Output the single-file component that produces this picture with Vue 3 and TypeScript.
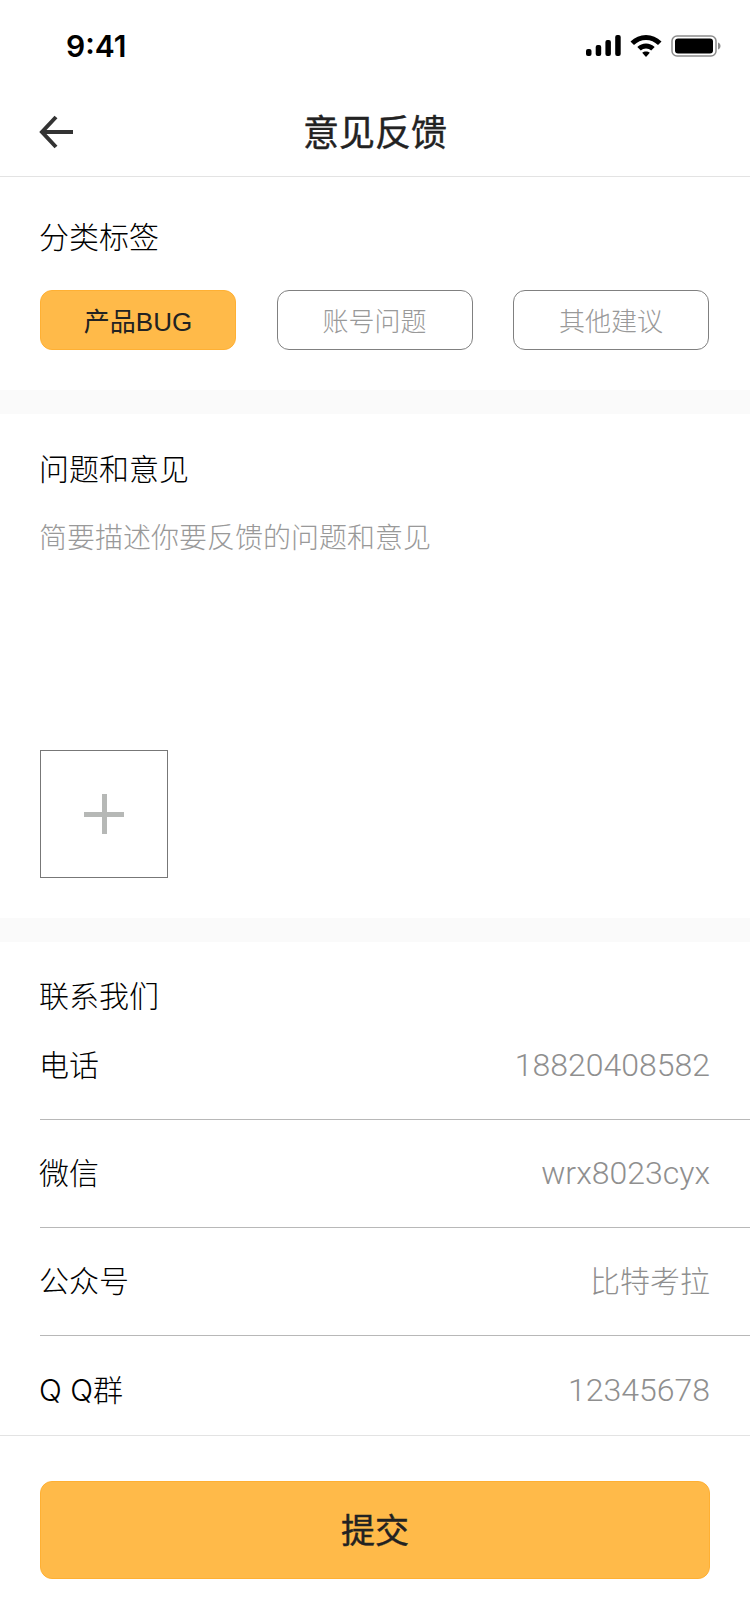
<template>
  <div class="page">
    <div class="status-bar">
      <span class="time">9:41</span>
      <div class="status-icons">
        <svg class="signal" width="35" height="22" viewBox="0 0 35 22" aria-hidden="true">
          <rect x="0" y="14" width="5.500" height="7" rx="2" />
          <rect x="9.700" y="10" width="5.500" height="11" rx="2" />
          <rect x="19.400" y="5" width="5.500" height="16" rx="2" />
          <rect x="29.200" y="0" width="5.500" height="21" rx="2" />
        </svg>
        <svg class="wifi" width="32" height="22" viewBox="0 0 32 22" aria-hidden="true">
          <path d="M16 0C10 0 5 2.300 0.500 6.500L4 10C7.300 6.900 11.400 5 16 5C20.600 5 24.700 6.900 28 10L31.500 6.500C27 2.300 22 0 16 0Z" />
          <path d="M16 8.500C12.700 8.500 9.700 9.800 7.300 12.100L10.800 15.600C12.200 14.300 14 13.500 16 13.500C18 13.500 19.800 14.300 21.200 15.600L24.700 12.100C22.300 9.800 19.300 8.500 16 8.500Z" />
          <path d="M16 22L12.200 17.800C13.200 16.900 14.500 16.400 16 16.400C17.500 16.400 18.800 16.900 19.800 17.800Z" />
        </svg>
        <svg class="battery" width="50" height="22" viewBox="0 0 50 22" aria-hidden="true">
          <rect x="1" y="1" width="44" height="20" rx="5" fill="none" stroke="#8c8c8c" stroke-width="1.500" />
          <rect x="4" y="3.500" width="38" height="15" rx="3" />
          <path d="M47 7.500C48.500 8 49.500 9.300 49.500 11C49.500 12.700 48.500 14 47 14.500Z" fill="#8c8c8c" />
        </svg>
      </div>
    </div>

    <header class="nav">
      <svg class="back" width="36" height="34" viewBox="0 0 36 34" aria-hidden="true">
        <path d="M18 2L4 17L18 32M4 17H35" fill="none" stroke="#333" stroke-width="4" />
      </svg>
      <h1 class="nav-title">意见反馈</h1>
    </header>

    <section class="block tags-block">
      <h2 class="block-title">分类标签</h2>
      <div class="tags">
        <button
          v-for="tag in tags"
          :key="tag"
          type="button"
          :class="['tag', { active: tag === activeTag }]"
        >
          {{ tag }}
        </button>
      </div>
    </section>

    <section class="block feedback-block">
      <h2 class="block-title">问题和意见</h2>
      <p class="placeholder">简要描述你要反馈的问题和意见</p>
      <div class="add-box">
        <span class="plus"></span>
      </div>
    </section>

    <section class="contact-block">
      <h2 class="block-title contact-title">联系我们</h2>
      <div v-for="row in contacts" :key="row.label" class="row">
        <span class="row-label">{{ row.label }}</span>
        <span :class="['row-value', { numeric: row.numeric }]">{{ row.value }}</span>
      </div>
    </section>

    <footer class="footer">
      <button type="button" class="submit">提交</button>
    </footer>
  </div>
</template>

<script setup lang="ts">
interface ContactRow {
  label: string;
  value: string;
  numeric?: boolean;
}

const tags: string[] = ['产品BUG', '账号问题', '其他建议'];
const activeTag = '产品BUG';

const contacts: ContactRow[] = [
  { label: '电话', value: '18820408582', numeric: true },
  { label: '微信', value: 'wrx8023cyx', numeric: true },
  { label: '公众号', value: '比特考拉' },
  { label: 'Q Q群', value: '12345678', numeric: true },
];
</script>

<style>
html,
body {
  margin: 0;
  background: #fff;
}
</style>

<style scoped>
.page {
  width: 750px;
  height: 1624px;
  overflow: hidden;
  background: #fff;
  color: #111;
  font-family: "Liberation Sans", "Noto Sans CJK SC", sans-serif;
}

.status-bar {
  display: flex;
  align-items: center;
  justify-content: space-between;
  box-sizing: border-box;
  height: 92px;
  padding: 0 29px 0 66px;
}

.time {
  font-family: Inter, "Liberation Sans", sans-serif;
  font-size: 30px;
  font-weight: 600;
  color: #000;
}

.status-icons {
  display: flex;
  align-items: center;
  gap: 9px;
}

.status-icons svg {
  display: block;
  fill: #000;
}

.nav {
  position: relative;
  display: flex;
  align-items: center;
  justify-content: center;
  box-sizing: border-box;
  height: 85px;
  padding-bottom: 9px;
  border-bottom: 1px solid #e3e3e3;
}

.back {
  position: absolute;
  left: 38px;
  top: 23px;
}

.nav-title {
  margin: 0;
  font-size: 36px;
  font-weight: 400;
  color: #222;
  -webkit-text-stroke: 0.4px #222;
}

.block-title {
  margin: 0 0 0 -1px;
  font-size: 30px;
  font-weight: 300;
  line-height: 42px;
  color: #000;
}

.block {
  padding: 0 40px;
  border-bottom: 24px solid #fafafa;
}

.tags-block {
  box-sizing: content-box;
  height: 173px;
  padding-top: 40px;
}

.tags {
  display: flex;
  justify-content: space-between;
  margin: 31px 1px 0 0;
}

.tag {
  box-sizing: border-box;
  width: 196px;
  height: 60px;
  padding: 0 0 2px;
  border: 1px solid #808080;
  border-radius: 12px;
  background: #fff;
  color: #999;
  font-family: inherit;
  font-size: 26px;
  font-weight: 300;
}

.tag.active {
  border-color: #ffb033;
  background: #ffba49;
  color: #222;
  font-weight: 400;
}

.feedback-block {
  box-sizing: content-box;
  height: 469px;
  padding-top: 35px;
}

.placeholder {
  margin: 27px 0 0 -1px;
  font-size: 28px;
  font-weight: 300;
  line-height: 42px;
  color: #999;
}

.add-box {
  display: flex;
  align-items: center;
  justify-content: center;
  box-sizing: border-box;
  width: 128px;
  height: 128px;
  margin-top: 190px;
  border: 1px solid #777;
}

.plus {
  position: relative;
  display: block;
  width: 40px;
  height: 40px;
}

.plus::before,
.plus::after {
  content: "";
  position: absolute;
  background: #b6b8b6;
}

.plus::before {
  left: 0;
  right: 0;
  top: 18px;
  height: 5px;
}

.plus::after {
  top: 0;
  bottom: 0;
  left: 18px;
  width: 5px;
}

.contact-block {
  padding: 40px 0 0 40px;
}

.contact-title {
  line-height: 30px;
}

.row {
  display: flex;
  align-items: center;
  justify-content: space-between;
  box-sizing: border-box;
  height: 108px;
  padding: 0 40px 2px 0;
  border-bottom: 1px solid #b8b8b8;
  font-size: 30px;
  font-weight: 300;
}

.row:last-child {
  height: 99px;
  padding-top: 10px;
  border-bottom: 0;
}

.row-label {
  margin: 0 0 4px -1px;
  color: #000;
  font-family: Inter, "Noto Sans CJK SC", sans-serif;
}

.row-value {
  margin-bottom: 4px;
  color: #8f8f8f;
  font-family: Roboto, "Noto Sans CJK SC", sans-serif;
}

.row-value.numeric {
  margin-bottom: 0;
  font-size: 32px;
}

.footer {
  box-sizing: border-box;
  height: 189px;
  padding: 45px 40px 0;
  border-top: 1px solid #e3e3e3;
}

.submit {
  display: block;
  box-sizing: border-box;
  width: 100%;
  height: 98px;
  padding: 0 0 3px;
  border: 1px solid #ffb033;
  border-radius: 12px;
  background: #ffba49;
  color: #222;
  font-family: inherit;
  font-size: 34px;
  font-weight: 400;
  -webkit-text-stroke: 0.4px #222;
}
</style>
